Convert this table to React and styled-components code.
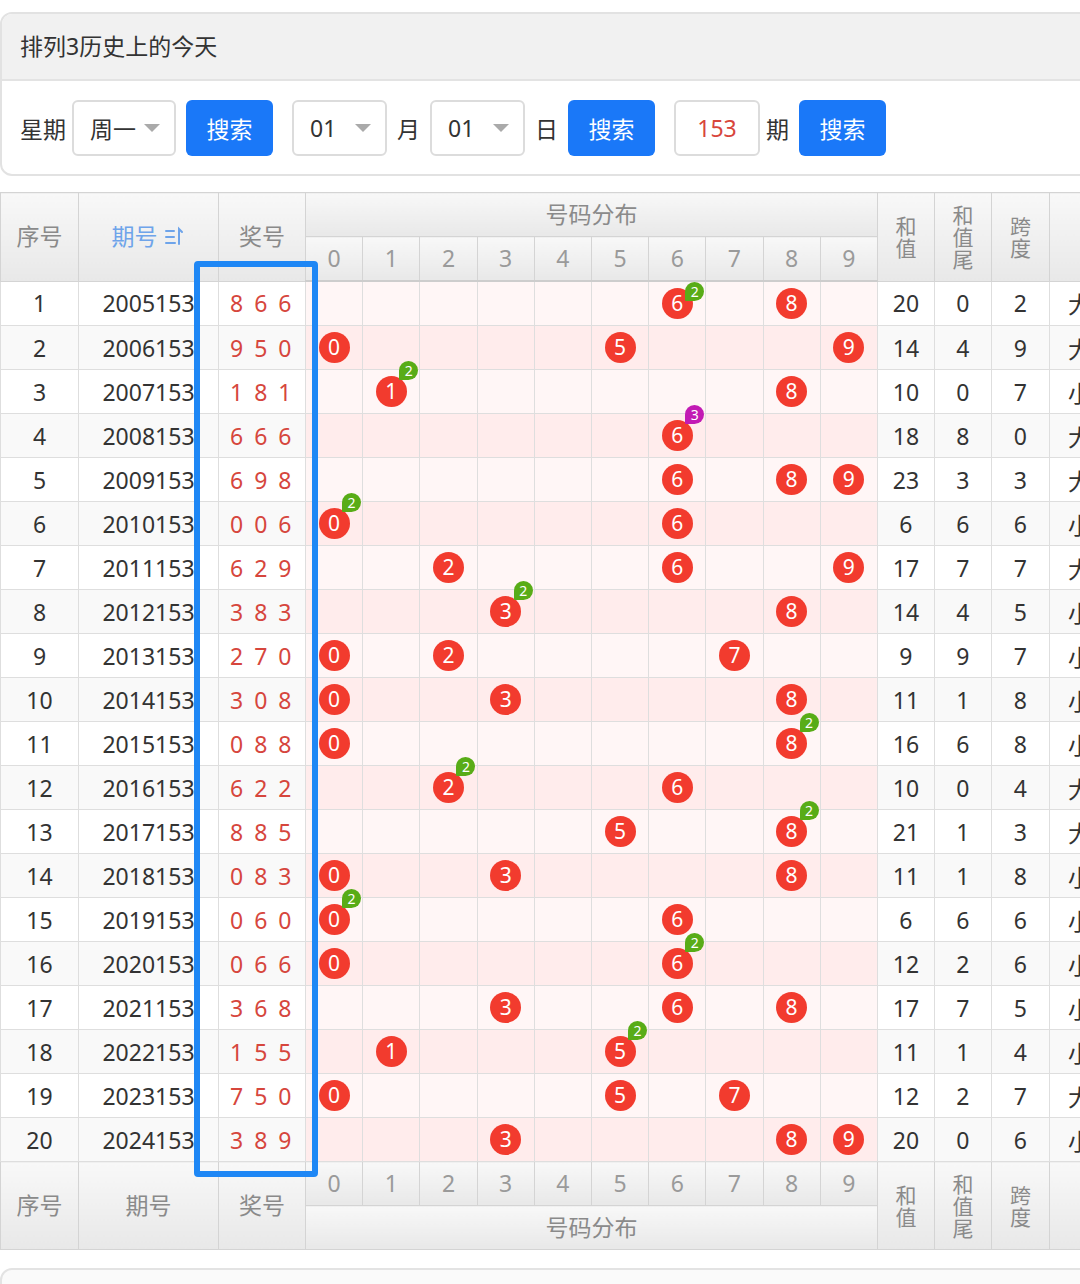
import React from "react";
import styled, { createGlobalStyle } from "styled-components";

const font = `"Noto Sans", "Noto Sans CJK SC", sans-serif`;

const GlobalStyle = createGlobalStyle`
  body {
    margin: 0;
    background: #fff;
    font-family: ${font};
    overflow: hidden;
  }
`;

const rows = [
  ["2005153", "866", 20, 0, 2],
  ["2006153", "950", 14, 4, 9],
  ["2007153", "181", 10, 0, 7],
  ["2008153", "666", 18, 8, 0],
  ["2009153", "698", 23, 3, 3],
  ["2010153", "006", 6, 6, 6],
  ["2011153", "629", 17, 7, 7],
  ["2012153", "383", 14, 4, 5],
  ["2013153", "270", 9, 9, 7],
  ["2014153", "308", 11, 1, 8],
  ["2015153", "088", 16, 6, 8],
  ["2016153", "622", 10, 0, 4],
  ["2017153", "885", 21, 1, 3],
  ["2018153", "083", 11, 1, 8],
  ["2019153", "060", 6, 6, 6],
  ["2020153", "066", 12, 2, 6],
  ["2021153", "368", 17, 7, 5],
  ["2022153", "155", 11, 1, 4],
  ["2023153", "750", 12, 2, 7],
  ["2024153", "389", 20, 0, 6],
];

const digits = [0, 1, 2, 3, 4, 5, 6, 7, 8, 9];

const Page = styled.div`
  width: 1160px;
  padding-top: 12px;
`;

const Card = styled.div`
  border: 2px solid #e2e2e2;
  border-radius: 12px;
  background: #fff;
  overflow: hidden;
`;

const CardHead = styled.div`
  height: 67px;
  box-sizing: border-box;
  padding: 0 0 4px 18px;
  background: #f1f1f1;
  border-bottom: 2px solid #e3e3e3;
  display: flex;
  align-items: center;
  font-size: 23px;
  color: #333;
`;

const Toolbar = styled.div`
  display: flex;
  align-items: center;
  gap: 19px;
  padding: 19px 18px 18px;
`;

const Group = styled.div`
  display: flex;
  align-items: center;
  gap: ${(p) => p.$gap || 10}px;
`;

const Label = styled.span`
  font-size: 23px;
  color: #333;
  margin-right: ${(p) => p.$mr || 0}px;
`;

const Select = styled.div`
  box-sizing: border-box;
  width: ${(p) => p.$w}px;
  height: 56px;
  border: 2px solid #dcdcdc;
  border-radius: 6px;
  display: flex;
  align-items: center;
  justify-content: space-between;
  padding: 0 14px 0 16px;
  font-size: 23px;
  color: #333;
`;

const Caret = styled.span`
  width: 0;
  height: 0;
  border-left: 8px solid transparent;
  border-right: 8px solid transparent;
  border-top: 8px solid #aaa;
`;

const Button = styled.button`
  width: 87px;
  height: 56px;
  border: none;
  border-radius: 6px;
  background: #1a78f8;
  color: #fff;
  font-family: ${font};
  font-size: 23px;
  padding: 0;
  margin-left: ${(p) => p.$ml || 0}px;
`;

const Input = styled.div`
  box-sizing: border-box;
  width: 86px;
  height: 56px;
  border: 2px solid #dcdcdc;
  border-radius: 6px;
  display: flex;
  align-items: center;
  justify-content: center;
  font-size: 23px;
  color: #d8463c;
`;

const TableWrap = styled.div`
  position: relative;
  margin-top: 16px;
`;

const Table = styled.table`
  border-collapse: collapse;
  table-layout: fixed;
  width: 1159px;
  border-top: 1px solid #e0e0e0;
`;

const Th = styled.th`
  height: 43px;
  padding: 0;
  font-weight: normal;
  font-size: 23px;
  line-height: 23px;
  color: ${(p) => (p.$blue ? "#6ea4ea" : p.$light ? "#9a9a9a" : "#8a8a8a")};
  background: linear-gradient(#f8f8f8, #e8e8e8);
  border: 1px solid #d4d4d4;
  text-align: center;
  vertical-align: middle;
`;

const HeadRow = styled.tr`
  & > th {
    border-bottom: 2px solid #cdcdcd;
  }
`;

const VStack = styled.span`
  display: inline-flex;
  flex-direction: column;
  align-items: center;
  font-size: 21px;
  line-height: 22px;
`;

const Td = styled.td`
  height: 43px;
  padding: 0;
  border: 1px solid #dedede;
  text-align: center;
  vertical-align: middle;
  font-size: 23px;
  color: ${(p) => (p.$red ? "#d6463d" : "#333")};
  letter-spacing: ${(p) => (p.$red ? 2.5 : 0)}px;
  white-space: nowrap;
  background: ${(p) =>
    p.$pink
      ? p.$even
        ? "#ffecec"
        : "#fff6f6"
      : p.$even
      ? "#f9f9f9"
      : "#fff"};
`;

const EdgeTd = styled(Td)`
  overflow: hidden;
  text-align: left;
  padding-left: 18px;
`;

const BallCell = styled.div`
  position: relative;
  height: 43px;
  display: flex;
  align-items: center;
  justify-content: center;
`;

const Ball = styled.span`
  width: 31px;
  height: 31px;
  border-radius: 50%;
  background: #f23b2e;
  color: #fff;
  font-size: 21px;
  line-height: 31px;
  text-align: center;
`;

const Badge = styled.span`
  position: absolute;
  top: ${(p) => (p.$first ? 0 : -9)}px;
  left: calc(50% + 8px);
  width: 19px;
  height: 19px;
  border-radius: 10px 10px 10px 1px;
  background: ${(p) => (p.$n > 2 ? "#c21ab4" : "#58ac17")};
  color: #fff;
  font-size: 14px;
  line-height: 19px;
  text-align: center;
  z-index: 2;
`;

const Highlight = styled.div`
  position: absolute;
  left: 194px;
  top: 69px;
  width: 124px;
  height: 916px;
  box-sizing: border-box;
  border: 6px solid #1e87f5;
  border-radius: 4px;
  pointer-events: none;
  z-index: 3;
`;

const NextCard = styled.div`
  margin-top: 18px;
  height: 120px;
  border: 2px solid #e3e3e3;
  border-radius: 12px;
  background: #fafafa;
`;

const SortIcon = () => (
  <svg width="22" height="22" viewBox="0 0 22 22" style={{ verticalAlign: "-3px", marginLeft: 6 }}>
    <g stroke="#6ea4ea" strokeWidth="2" fill="none" strokeLinecap="round">
      <path d="M2 5H10" />
      <path d="M2 11H10" />
      <path d="M2 17H11" />
      <path d="M15 18V3L18 6" />
    </g>
  </svg>
);

const VText = ({ text }) => (
  <VStack>
    {text.split("").map((c, i) => <span key={i}>{c}</span>)}
  </VStack>
);

const SideHeads = ({ footer }) => (
  <>
    <Th rowSpan={2}>序号</Th>
    <Th rowSpan={2} $blue={!footer}>
      期号{!footer && <SortIcon />}
    </Th>
    <Th rowSpan={2}>奖号</Th>
  </>
);

const TailHeads = () => (
  <>
    <Th rowSpan={2}><VText text="和值" /></Th>
    <Th rowSpan={2}><VText text="和值尾" /></Th>
    <Th rowSpan={2}><VText text="跨度" /></Th>
    <Th rowSpan={2}></Th>
  </>
);

const DigitHeads = () => digits.map((d) => (
  <Th key={d} $light>{d}</Th>
));

const App = () => {
  return (
    <Page>
      <GlobalStyle />
      <Card>
        <CardHead>排列3历史上的今天</CardHead>
        <Toolbar>
          <Group $gap={6}>
            <Label>星期</Label>
            <Select $w={104}>周一<Caret /></Select>
            <Button $ml={4}>搜索</Button>
          </Group>
          <Group>
            <Select $w={95}>01<Caret /></Select>
            <Label>月</Label>
            <Select $w={95}>01<Caret /></Select>
            <Label>日</Label>
            <Button>搜索</Button>
          </Group>
          <Group $gap={6}>
            <Input>153</Input>
            <Label $mr={4}>期</Label>
            <Button>搜索</Button>
          </Group>
        </Toolbar>
      </Card>

      <TableWrap>
        <Table>
          <colgroup>
            <col style={{ width: 78 }} />
            <col style={{ width: 140 }} />
            <col style={{ width: 87 }} />
            {digits.map((d) => <col key={d} style={{ width: 57.2 }} />)}
            <col style={{ width: 57 }} />
            <col style={{ width: 57 }} />
            <col style={{ width: 58 }} />
            <col style={{ width: 110 }} />
          </colgroup>
          <thead>
            <tr>
              <SideHeads />
              <Th colSpan={10}>号码分布</Th>
              <TailHeads />
            </tr>
            <HeadRow>
              <DigitHeads />
            </HeadRow>
          </thead>
          <tbody>
            {rows.map(([issue, num, sum, tail, span], i) => {
              const even = i % 2 === 1;
              const ds = num.split("").map(Number);
              return (
                <tr key={issue}>
                  <Td $even={even}>{i + 1}</Td>
                  <Td $even={even}>{issue}</Td>
                  <Td $even={even} $red>{num.split("").join(" ")}</Td>
                  {digits.map((d) => {
                    const n = ds.filter((x) => x === d).length;
                    return (
                      <Td key={d} $pink $even={even}>
                        <BallCell>
                          {n > 0 && <Ball>{d}</Ball>}
                          {n > 1 && <Badge $n={n} $first={i === 0}>{n}</Badge>}
                        </BallCell>
                      </Td>
                    );
                  })}
                  <Td $even={even}>{sum}</Td>
                  <Td $even={even}>{tail}</Td>
                  <Td $even={even}>{span}</Td>
                  <EdgeTd $even={even}>
                    {ds.map((x) => (x >= 5 ? "大" : "小")).join("")}
                  </EdgeTd>
                </tr>
              );
            })}
          </tbody>
          <tfoot>
            <tr>
              <SideHeads footer />
              <DigitHeads />
              <TailHeads />
            </tr>
            <tr>
              <Th colSpan={10}>号码分布</Th>
            </tr>
          </tfoot>
        </Table>
        <Highlight />
      </TableWrap>

      <NextCard />
    </Page>
  );
};

export default App;
